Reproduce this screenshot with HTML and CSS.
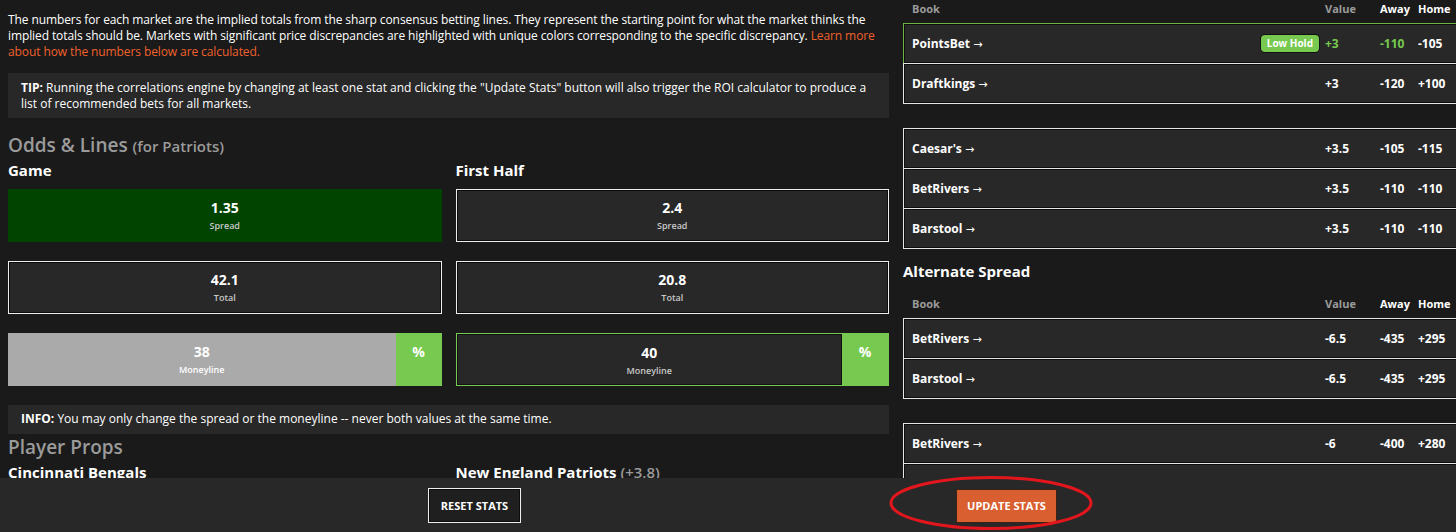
FILE: index.html
```html
<html>

<head>
    <link rel="stylesheet" href="styles.css">
    <title>Odds &amp; Lines</title>
</head>

<body>
    <div class="page">
        <main class="left">
            <p class="intro">The numbers for each market are the implied totals from the sharp consensus betting lines. They represent the starting point for what the market thinks the implied totals should be. Markets with significant price discrepancies are highlighted with unique colors corresponding to the specific discrepancy. <a href="#">Learn more about how the numbers below are calculated.</a></p>

            <div class="note tip"><b>TIP:</b> Running the correlations engine by changing at least one stat and clicking the "Update Stats" button will also trigger the ROI calculator to produce a list of recommended bets for all markets.</div>

            <h2 class="section">Odds &amp; Lines <small>(for Patriots)</small></h2>

            <div class="markets">
                <div class="market">
                    <h3>Game</h3>
                    <div class="cell cell-hit"><strong>1.35</strong><span>Spread</span></div>
                    <div class="cell"><strong>42.1</strong><span>Total</span></div>
                    <div class="ml ml-grey">
                        <div class="ml-val"><strong>38</strong><span>Moneyline</span></div>
                        <div class="ml-pct">%</div>
                    </div>
                </div>

                <div class="market">
                    <h3>First Half</h3>
                    <div class="cell"><strong>2.4</strong><span>Spread</span></div>
                    <div class="cell"><strong>20.8</strong><span>Total</span></div>
                    <div class="ml ml-active">
                        <div class="ml-val"><strong>40</strong><span>Moneyline</span></div>
                        <div class="ml-pct">%</div>
                    </div>
                </div>
            </div>

            <div class="note info"><b>INFO:</b> You may only change the spread or the moneyline -- never both values at the same time.</div>

            <h2 class="section props">Player Props</h2>
            <div class="teams">
                <h3>Cincinnati Bengals</h3>
                <h3>New England Patriots <small>(+3.8)</small></h3>
            </div>
        </main>

        <aside class="books">
            <div class="book-head"><span class="muted">Book</span><span></span><span class="muted">Value</span><span>Away</span><span>Home</span></div>
            <div class="odds-group">
                <div class="odds-row best"><span>PointsBet <i class="arrow">&rarr;</i></span><span class="badge">Low Hold</span><span class="good">+3</span><span class="good">-110</span><span>-105</span></div>
                <div class="odds-row"><span>Draftkings <i class="arrow">&rarr;</i></span><span></span><span>+3</span><span>-120</span><span>+100</span></div>
            </div>
            <div class="odds-group">
                <div class="odds-row"><span>Caesar's <i class="arrow">&rarr;</i></span><span></span><span>+3.5</span><span>-105</span><span>-115</span></div>
                <div class="odds-row"><span>BetRivers <i class="arrow">&rarr;</i></span><span></span><span>+3.5</span><span>-110</span><span>-110</span></div>
                <div class="odds-row"><span>Barstool <i class="arrow">&rarr;</i></span><span></span><span>+3.5</span><span>-110</span><span>-110</span></div>
            </div>

            <h3 class="alt-title">Alternate Spread</h3>
            <div class="book-head"><span class="muted">Book</span><span></span><span class="muted">Value</span><span>Away</span><span>Home</span></div>
            <div class="odds-group">
                <div class="odds-row"><span>BetRivers <i class="arrow">&rarr;</i></span><span></span><span>-6.5</span><span>-435</span><span>+295</span></div>
                <div class="odds-row"><span>Barstool <i class="arrow">&rarr;</i></span><span></span><span>-6.5</span><span>-435</span><span>+295</span></div>
            </div>
            <div class="odds-group">
                <div class="odds-row"><span>BetRivers <i class="arrow">&rarr;</i></span><span></span><span>-6</span><span>-400</span><span>+280</span></div>
                <div class="odds-row"><span>Barstool <i class="arrow">&rarr;</i></span><span></span><span>-6</span><span>-400</span><span>+280</span></div>
            </div>
        </aside>
    </div>

    <footer class="actions">
        <button class="btn btn-reset">Reset Stats</button>
        <button class="btn btn-update">Update Stats</button>
        <svg class="circled" width="204" height="56" viewBox="0 0 204 56">
            <ellipse cx="102" cy="28" rx="100" ry="25.5" fill="none" stroke="#e3161d" stroke-width="3" />
        </svg>
    </footer>
</body>

</html>
```

FILE: styles.css
```css
body {
    margin: 0;
    background: #1a1a1a;
    color: #fff;
    font-family: "Open Sans", "Noto Sans", sans-serif;
    overflow: hidden;
}

.page {
    display: flex;
    gap: 14px;
    padding-left: 8px;
}

.left {
    flex: 0 0 881px;
}

.intro {
    margin: 12px 0 0;
    font-size: 12px;
    line-height: 16px;
    letter-spacing: -0.1px;
}

.intro a {
    color: #f0612c;
    text-decoration: none;
}

.note {
    background: #282828;
    font-size: 12px;
    line-height: 16px;
    padding: 7px 13px 6px;
}

.tip {
    margin-top: 13px;
}

.section {
    margin: 15px 0 0;
    font-size: 19px;
    line-height: 24px;
    font-weight: 600;
    color: #9b9b9b;
}

.section small {
    font-size: 15px;
}

h3 {
    margin: 3px 0 9px;
    font-size: 15px;
    line-height: 19px;
    font-weight: 700;
}

.markets {
    display: grid;
    grid-template-columns: 1fr 1fr;
    column-gap: 14px;
}

.cell,
.ml-val {
    display: flex;
    flex-direction: column;
    align-items: center;
}

.cell strong,
.ml strong,
.ml-pct {
    font-size: 14px;
    line-height: 18px;
    font-weight: 700;
}

.cell span,
.ml span {
    margin-top: 2px;
    font-size: 9px;
    line-height: 14px;
    font-weight: 600;
    color: #c9c9c9;
}

.cell {
    box-sizing: border-box;
    height: 53px;
    padding-top: 9px;
    margin-bottom: 19px;
    background: #282828;
    border: 1px solid #ededed;
    box-shadow: inset 0 0 0 1px #0c0c0c;
}

.cell-hit {
    background: #004400;
    border-color: #004400;
    box-shadow: none;
}

.ml {
    box-sizing: border-box;
    display: flex;
    height: 53px;
    margin-bottom: 19px;
}

.ml-val {
    flex: 1;
    box-sizing: border-box;
    padding-top: 10px;
}

.ml-pct {
    width: 46px;
    padding-top: 10px;
    text-align: center;
    background: #77c94f;
}

.ml-grey .ml-val {
    background: #aaaaaa;
}

.ml-grey .ml-val span {
    color: #fff;
}

.ml-active {
    border: 1px solid #77c94f;
}

.ml-active .ml-val {
    padding-top: 9px;
    background: #282828;
    border: 1px solid #111;
}

.ml-active .ml-pct {
    padding-top: 9px;
}

.info {
    padding: 6px 13px 7px;
}

.props {
    margin-top: 1px;
}

.teams {
    display: grid;
    grid-template-columns: 1fr 1fr;
    column-gap: 14px;
}

.teams h3 {
    margin-top: 4px;
}

.teams small {
    font-size: 15px;
    font-weight: 600;
    color: #9b9b9b;
}

/* right side: sportsbook odds */

.books {
    flex: 0 0 566px;
    font-size: 12px;
    font-weight: 700;
}

.book-head,
.odds-row {
    display: grid;
    grid-template-columns: 1fr auto 55px 38px 50px;
    align-items: center;
    box-sizing: border-box;
    padding-left: 8px;
}

.book-head {
    height: 16px;
    line-height: 15px;
    margin-bottom: 7px;
    font-size: 11px;
    border: 1px solid transparent;
}

.muted {
    color: #9b9b9b;
}

.odds-group {
    margin-bottom: 24px;
}

.odds-row {
    height: 41px;
    background: #282828;
    border: 1px solid #e6e6e6;
    box-shadow: inset 0 0 0 1px #0d0d0d;
}

.odds-row + .odds-row {
    margin-top: -1px;
}

.odds-row.best {
    border-color: #6cb545;
}

.arrow {
    font-family: "DejaVu Sans", sans-serif;
    font-style: normal;
    font-weight: 400;
    font-size: 11px;
}

.badge {
    margin-right: 6px;
    padding: 1px 6px;
    font-size: 10px;
    line-height: 15px;
    border-radius: 4px;
    background: #77c94f;
    box-shadow: 0 0 0 1px #111;
}

.good {
    color: #77c94f;
}

.alt-title {
    margin: -11px 0 14px;
    font-size: 15px;
}

.actions {
    position: fixed;
    left: 0;
    right: 0;
    bottom: 0;
    height: 54px;
    display: flex;
    align-items: center;
    gap: 435px;
    padding-left: 428px;
    background: #282828;
}

.btn {
    box-sizing: border-box;
    font-family: "Open Sans", "Noto Sans", sans-serif;
    font-size: 11px;
    font-weight: 700;
    color: #fff;
    text-transform: uppercase;
    cursor: pointer;
}

.btn-reset {
    width: 93px;
    height: 35px;
    background: #1f1f1f;
    border: 1px solid #eee;
    box-shadow: inset 0 0 0 1px #0c0c0c;
}

.btn-update {
    width: 101px;
    height: 34px;
    margin-top: 1px;
    background: #d95f30;
    border: 1px solid #3a2216;
}

.circled {
    position: absolute;
    left: 889px;
    top: -3px;
}
```
